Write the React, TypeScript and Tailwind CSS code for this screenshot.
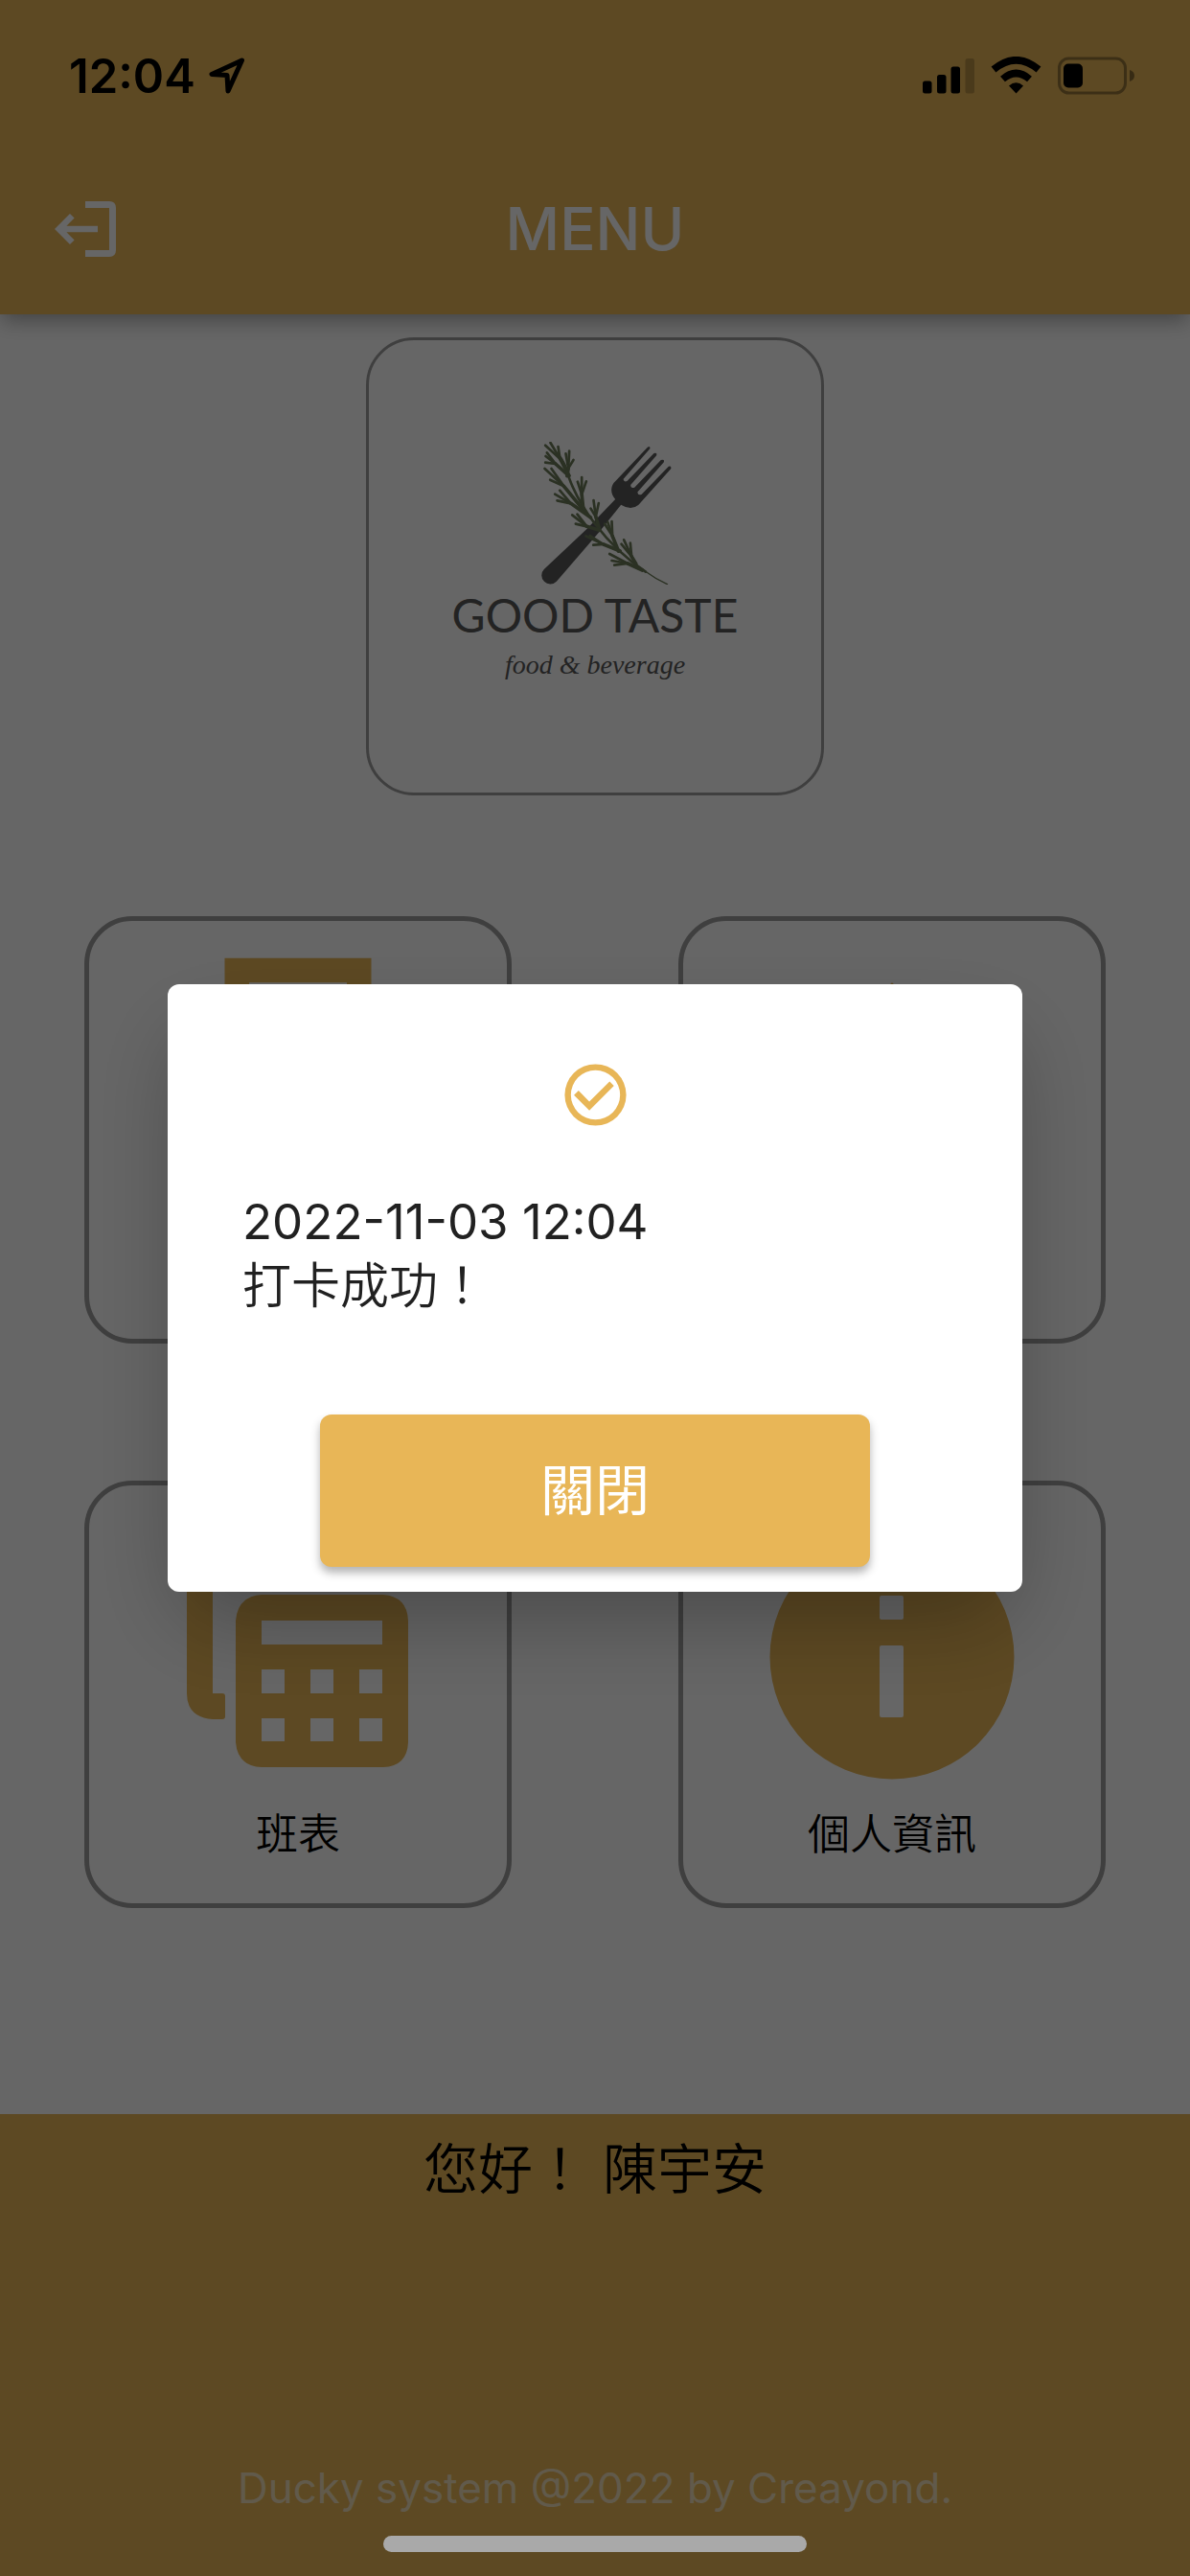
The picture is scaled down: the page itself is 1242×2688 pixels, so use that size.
import { MdHome, MdPunchClock } from "react-icons/md";

// Each sprig: where it leaves the stem, where it fans out, and the needle tips.
const SPRIGS = [
  { from: [700, 468], to: [672, 416], tips: [[626, 374], [642, 366], [666, 378]] },
  { from: [700, 470], to: [658, 432], tips: [[631, 397], [627, 408], [626, 428]] },
  { from: [694, 470], to: [698, 446], tips: [[690, 400], [701, 392], [714, 420]] },
  { from: [748, 580], to: [684, 502], tips: [[624, 447], [645, 447], [641, 482]] },
  { from: [745, 575], to: [740, 528], tips: [[727, 488], [740, 474], [754, 487]] },
  { from: [768, 600], to: [706, 556], tips: [[656, 527], [671, 515], [663, 547]] },
  { from: [795, 635], to: [784, 598], tips: [[768, 572], [777, 546], [793, 555]] },
  { from: [795, 640], to: [756, 628], tips: [[710, 592], [726, 590], [721, 620]] },
  { from: [855, 705], to: [836, 658], tips: [[812, 620], [821, 614], [834, 612]] },
  { from: [860, 705], to: [808, 684], tips: [[753, 658], [766, 657], [776, 686]] },
  { from: [910, 745], to: [896, 722], tips: [[864, 683], [872, 670], [892, 680]] },
  { from: [930, 765], to: [884, 744], tips: [[827, 714], [834, 735], [842, 749]] },
];

function LogoMark() {
  return (
    <svg viewBox="545 363 476 447" className="h-[149px] w-[159px]" aria-hidden="true">
      <path
        fill="#575757"
        d="M622 762 L755 637 L845 543 C828 525 830 500 845 487 L946 380 Q954 374 954 384 L870 480 Q872 490 882 486 L966 399 Q977 396 974 406 L893 498 Q893 510 905 506 L988 420 Q1000 416 997 427 L915 520 Q914 532 927 528 L1012 440 Q1022 438 1019 448 L918 560 Q895 580 863 560 L795 645 L661 800 A27 27 0 0 1 622 762Z"
      />
      <g fill="none" stroke="#6b7a58" strokeLinecap="round">
        <path
          strokeWidth="8"
          d="M664 400 Q690 430 700 475 Q725 545 780 618 Q850 710 940 770"
        />
        <path strokeWidth="4" d="M935 766 Q970 792 1008 809" />
        {SPRIGS.map(({ from, to, tips }, i) => (
          <g key={i}>
            <path strokeWidth="11" d={`M${from} L${to}`} />
            {tips.map((tip) => (
              <path key={tip.join()} strokeWidth="8" d={`M${to} L${tip}`} />
            ))}
          </g>
        ))}
      </g>
    </svg>
  );
}

function StatusBar() {
  return (
    <div className="flex h-[150px] items-center justify-between pt-2 pr-[57px] pl-[72px]">
      <div className="flex items-center gap-3.5 text-black">
        <span className="text-[49px] leading-none font-semibold">12:04</span>
        <svg viewBox="0 0 38 38" className="size-[38px]" aria-hidden="true">
          <path
            d="M34.500 3 L3 17.500 L19 18.500 L20 35 Z"
            fill="none"
            stroke="black"
            strokeWidth="5"
            strokeLinejoin="round"
          />
        </svg>
      </div>
      <svg viewBox="0 0 222 40" className="h-[40px] w-[222px]" aria-hidden="true">
        <rect x="0" y="25.500" width="9.500" height="13" rx="2.500" />
        <rect x="15" y="19" width="9.500" height="19.500" rx="2.500" />
        <rect x="29.500" y="10.500" width="9.500" height="28" rx="2.500" />
        <rect x="44.500" y="2" width="9.500" height="36.500" rx="2.500" opacity="0.2" />
        <g fill="none" stroke="black" strokeWidth="7.500">
          <path d="M74 13.500 Q97.500 -6 121 13.500" />
          <path d="M83.500 23.500 Q97.500 11.500 111.500 23.500" />
        </g>
        <path d="M90 30.500 Q97.500 24 105 30.500 L97.500 38.500Z" />
        <rect
          x="142.500"
          y="2"
          width="69"
          height="36"
          rx="10"
          fill="none"
          stroke="black"
          strokeWidth="3"
          opacity="0.35"
        />
        <rect x="147" y="7.500" width="20" height="25" rx="5" />
        <path d="M216 14 Q221 15.500 221 20 Q221 24.500 216 26Z" opacity="0.4" />
      </svg>
    </div>
  );
}

function LogoutIcon() {
  return (
    <svg viewBox="0 0 64 58" className="h-[58px] w-[64px]" aria-hidden="true">
      <path
        d="M32 3.500 H57 Q60.500 3.500 60.500 7 V51 Q60.500 54.500 57 54.500 H32"
        fill="none"
        stroke="white"
        strokeWidth="7"
      />
      <path
        d="M45 29 H5 M18.300 15.200 L4.600 29 L18.300 42.800"
        fill="none"
        stroke="white"
        strokeWidth="6.500"
      />
    </svg>
  );
}

function ScheduleIcon() {
  return (
    <svg viewBox="0 0 306 306" className="size-[306px]" fill="#e8b657" aria-hidden="true">
      <path d="M37 36 H64 V191 H74 Q77 191 77 194 V215 Q77 218 74 218 H64 Q37 216 37 191Z" />
      <path
        fillRule="evenodd"
        d="M115 88 H242 Q267 90 268 115 V242 Q267 267 242 268 H115 Q90 267 88 242 V115 Q90 90 115 88Z M115 115 V140 H241 V115Z M115 166 V191 H139 V166Z M166 166 V191 H190 V166Z M217 166 V191 H241 V166Z M115 217 V241 H139 V217Z M166 217 V241 H190 V217Z M217 217 V241 H241 V217Z"
      />
    </svg>
  );
}

function InfoIcon() {
  return (
    <svg viewBox="0 0 306 306" className="size-[306px]" fill="#e8b657" aria-hidden="true">
      <path
        fillRule="evenodd"
        d="M153 25.500 A127.500 127.500 0 1 1 153 280.500 A127.500 127.500 0 1 1 153 25.500Z M142 89 Q140 89 140 91 V112 Q140 114 142 114 H163 Q165 114 165 112 V91 Q165 89 163 89Z M142 141 Q140 141 140 143 V214 Q140 216 142 216 H163 Q165 216 165 214 V143 Q165 141 163 141Z"
      />
    </svg>
  );
}

const MENU = [
  { name: "打卡", icon: <MdPunchClock className="size-[306px]" /> },
  { name: "首頁", icon: <MdHome className="size-[306px]" /> },
  { name: "班表", label: "班表", icon: <ScheduleIcon /> },
  { name: "個人資訊", label: "個人資訊", icon: <InfoIcon /> },
];

export default function App() {
  return (
    <div className="relative flex min-h-screen flex-col bg-white font-['Inter','Noto_Sans_CJK_TC',sans-serif]">
      <header className="relative bg-[#e8b657] shadow-[0_8px_20px_-2px_rgba(0,0,0,0.35)]">
        <StatusBar />
        <div className="grid h-[178px] grid-cols-3 items-center px-[57px]">
          <button type="button" aria-label="登出" className="w-fit">
            <LogoutIcon />
          </button>
          <h1 className="text-center text-[62px] leading-none font-medium text-white">MENU</h1>
        </div>
      </header>

      <main className="flex-1">
        <div className="mx-auto mt-6 flex h-[478px] w-[478px] flex-col items-center rounded-[50px] border-3 border-[#9e9e9e] pt-[106px] text-[#575757]">
          <LogoMark />
          <p className="mt-1 font-['Lato',sans-serif] text-[48px] leading-[56px]">GOOD TASTE</p>
          <p className="font-['Liberation_Serif',serif] text-[28px] leading-[48px] italic">
            food &amp; beverage
          </p>
        </div>

        <div className="mt-[126px] grid grid-cols-2 gap-x-[174px] gap-y-[143px] px-[88px]">
          {MENU.map(({ name, label, icon }) => (
            <button
              key={name}
              type="button"
              aria-label={name}
              className="flex aspect-square flex-col items-center rounded-[50px] border-5 border-[#9e9e9e] pt-[26px] text-[#e8b657]"
            >
              {icon}
              {label && (
                <span className="text-[44px] leading-[64px] font-[350] text-black">{label}</span>
              )}
            </button>
          ))}
        </div>
      </main>

      <footer className="mt-[214px] flex min-h-[482px] flex-col items-center justify-between bg-[#e8b657] pt-4 pb-[62px]">
        <p className="text-[57px] leading-[84px] font-[350] text-black">您好！ 陳宇安</p>
        <p className="text-[44px] leading-[60px] text-[#f3e0bb]">
          Ducky system @2022 by Creayond.
        </p>
      </footer>

      <div className="fixed inset-0 flex items-center justify-center bg-black/60">
        <div
          role="dialog"
          aria-modal="true"
          aria-labelledby="punch-result"
          className="flex w-[892px] flex-col items-center rounded-xl bg-white pt-[77px] pb-[26px] shadow-[0_40px_90px_-15px_rgba(0,0,0,0.3)]"
        >
          <svg viewBox="0 0 24 24" className="size-[77px]" fill="#e8b657" aria-hidden="true">
            <path d="M12 2a10 10 0 1 0 0 20 10 10 0 0 0 0-20zm0 18a8 8 0 1 1 0-16 8 8 0 0 1 0 16z" />
            <path d="M16.600 7.600 10 14.200 6.500 10.600 5 12.100 10 17.100 18 9z" />
          </svg>
          <div
            id="punch-result"
            className="mt-[60px] w-full px-[78px] text-[51px] leading-[67px] text-[#212121]"
          >
            <p>2022-11-03 12:04</p>
            <p className="font-[350]">打卡成功！</p>
          </div>
          <button
            type="button"
            className="mt-[101px] h-[159px] w-[574px] rounded-xl bg-[#e8b657] text-[57px] text-white shadow-[0_6px_10px_rgba(0,0,0,0.3)]"
          >
            關閉
          </button>
        </div>
      </div>

      <div className="fixed bottom-[25px] left-1/2 h-[17px] w-[442px] -translate-x-1/2 rounded-full bg-[#a9a9a9]" />
    </div>
  );
}
